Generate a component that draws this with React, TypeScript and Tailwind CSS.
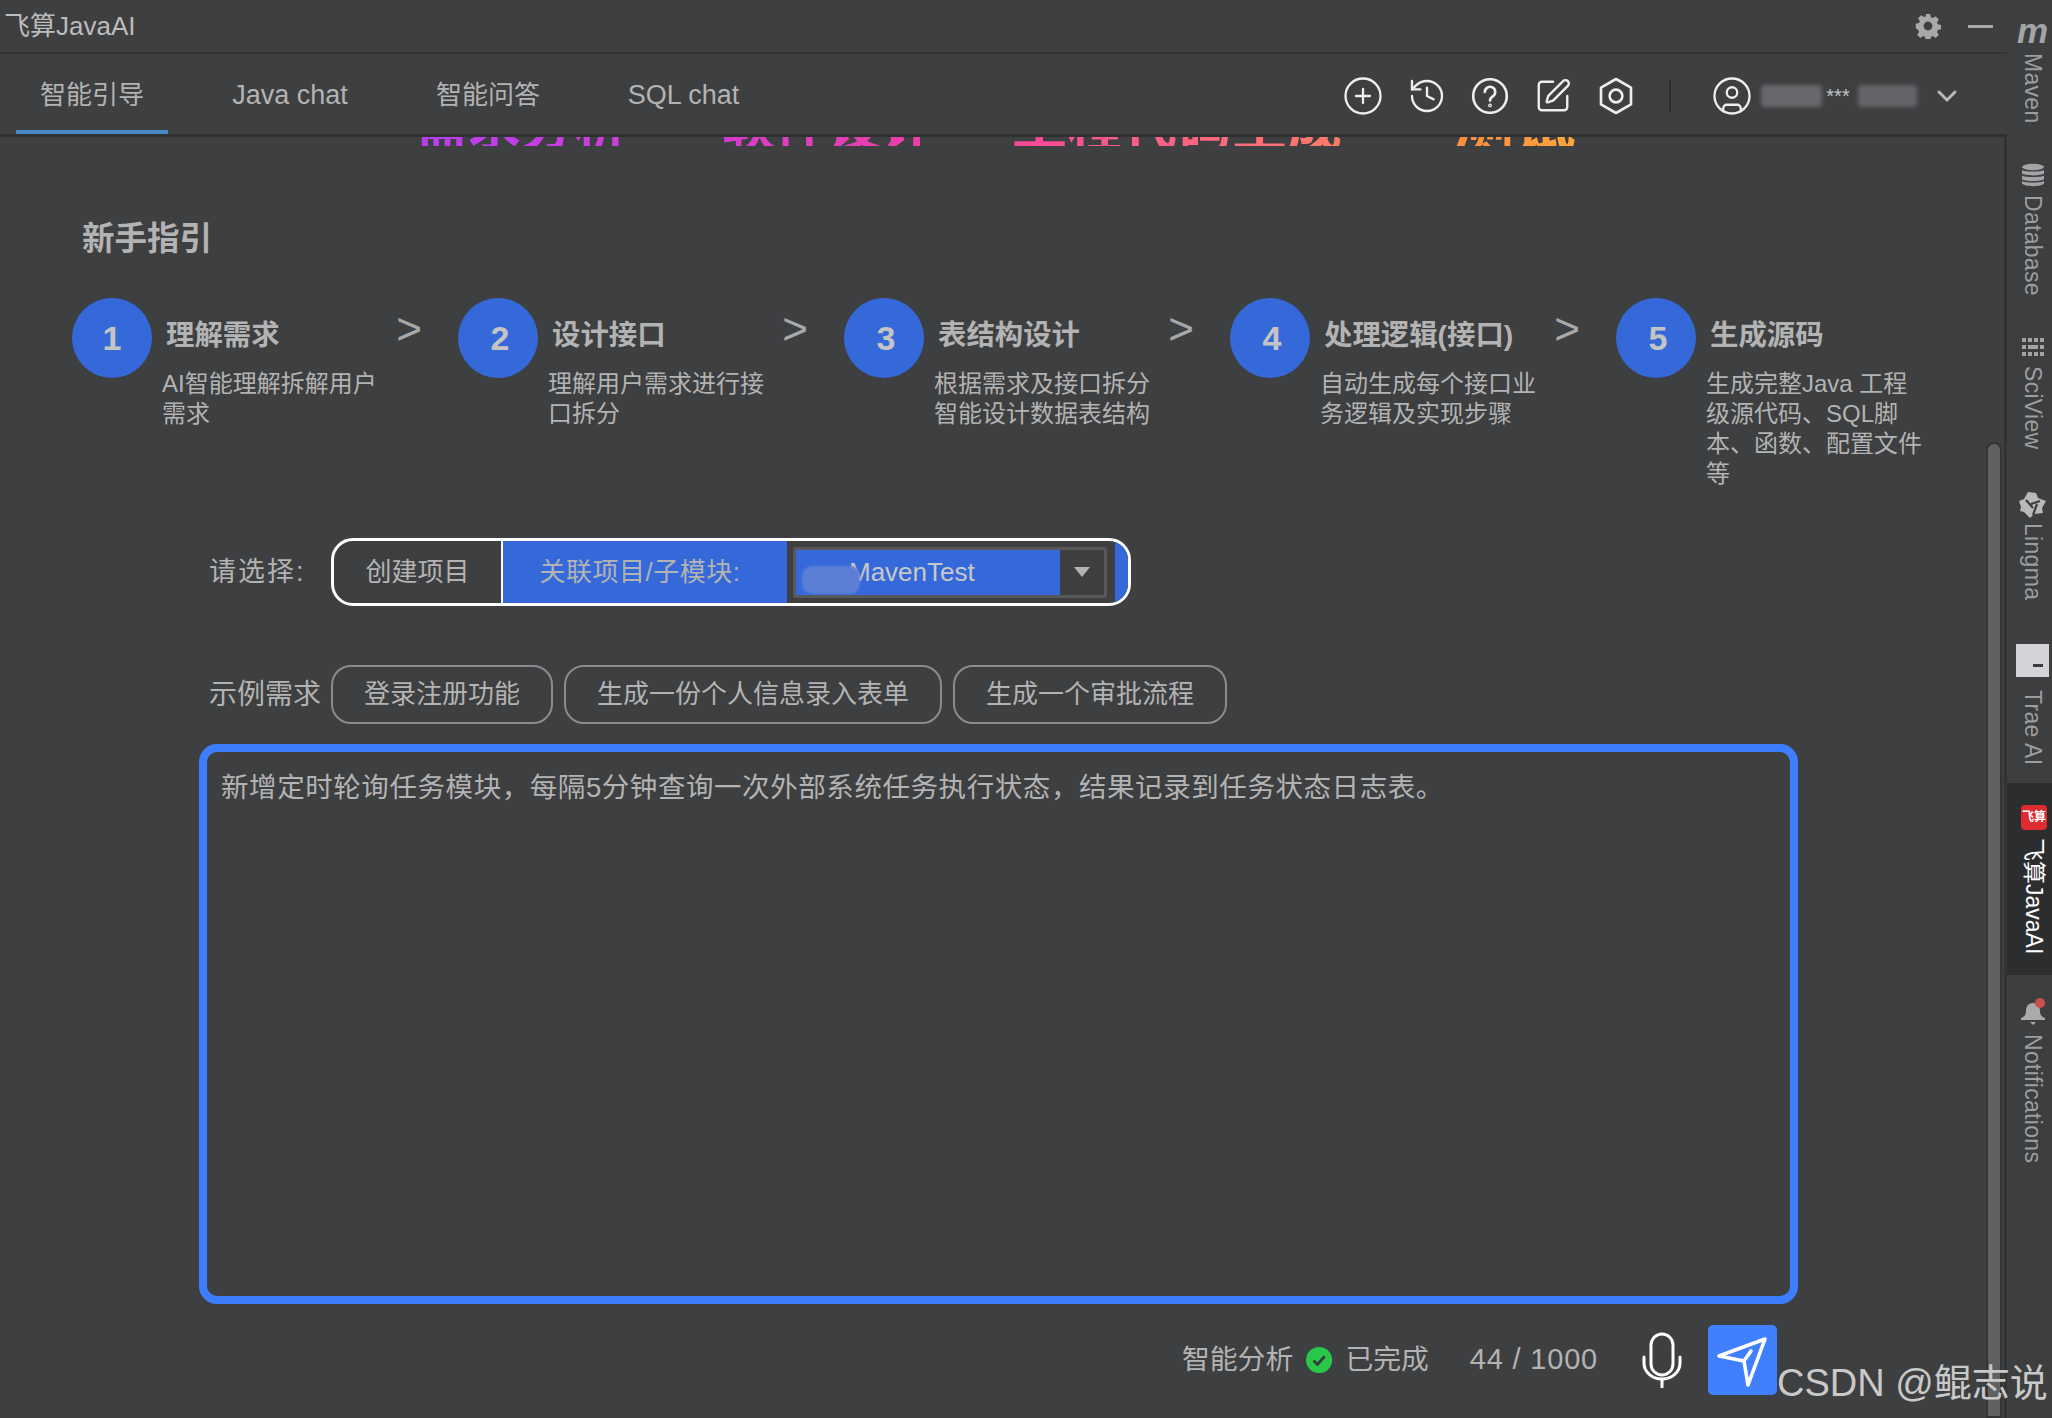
import { ChevronDown, CirclePlus, CircleUser, History, SquarePen } from 'lucide-react';
import type { ReactNode } from 'react';

const FONT = 'font-["Liberation_Sans","Noto_Sans_CJK_SC",sans-serif]';

const TABS = [
  { label: '智能引导', width: 'w-[152px] text-[26px]', active: true },
  { label: 'Java chat', width: 'w-[116px] ml-[64px] text-[27px]', active: false },
  { label: '智能问答', width: 'w-[104px] ml-[88px] text-[26px]', active: false },
  { label: 'SQL chat', width: 'w-[111px] ml-[88px] text-[27px]', active: false },
];

const STEPS = [
  { n: '1', title: '理解需求', desc: ['AI智能理解拆解用户', '需求'] },
  { n: '2', title: '设计接口', desc: ['理解用户需求进行接', '口拆分'] },
  { n: '3', title: '表结构设计', desc: ['根据需求及接口拆分', '智能设计数据表结构'] },
  { n: '4', title: '处理逻辑(接口)', desc: ['自动生成每个接口业', '务逻辑及实现步骤'] },
  { n: '5', title: '生成源码', desc: ['生成完整Java 工程', '级源代码、SQL脚', '本、函数、配置文件', '等'] },
];

const Chips = ['登录注册功能', '生成一份个人信息录入表单', '生成一个审批流程'];

function QuestionCircle() {
  return (
    <svg width="38" height="38" viewBox="0 0 38 38" fill="none" stroke="#eeeeee" strokeWidth="2.6" strokeLinecap="round">
      <circle cx="19" cy="19" r="16.8" />
      <path d="M13.8 15a5.2 5.2 0 1 1 8 4.4c-1.9 1.2-2.8 2.2-2.8 4.2" />
      <circle cx="19" cy="28.4" r="0.6" />
    </svg>
  );
}

function HexNut() {
  return (
    <svg width="34" height="38" viewBox="0 0 34 38" fill="none" stroke="#eeeeee" strokeWidth="2.6" strokeLinejoin="round">
      <path d="M17 2l15 8.6v16.8L17 36 2 27.4V10.6z" />
      <circle cx="17" cy="19" r="6.4" />
    </svg>
  );
}

function Gear() {
  return (
    <svg width="26" height="26" viewBox="0 0 26 26" fill="#a9a9a9">
      <path
        fillRule="evenodd"
        d="M10.8 1h4.4l.7 3.3 1.9.8 2.9-1.8 3.1 3.1-1.8 2.9.8 1.9 3.3.7v4.4l-3.3.7-.8 1.9 1.8 2.9-3.1 3.1-2.9-1.8-1.9.8-.7 3.3h-4.4l-.7-3.3-1.9-.8-2.9 1.8-3.1-3.1 1.8-2.9-.8-1.9L.8 15.2v-4.4l3.3-.7.8-1.9L3.1 5.3l3.1-3.1 2.9 1.8 1.9-.8zM13 8.6a4.4 4.4 0 1 0 0 8.8 4.4 4.4 0 0 0 0-8.8z"
      />
    </svg>
  );
}

function Mic() {
  return (
    <svg width="40" height="56" viewBox="0 0 40 56" fill="none" stroke="#ffffff" strokeWidth="3" strokeLinecap="round">
      <rect x="9" y="2" width="22" height="41" rx="11" />
      <path d="M2 25v6a18 16 0 0 0 36 0v-6M20 47v8" />
    </svg>
  );
}

function PlaneIcon() {
  return (
    <svg width="69" height="70" viewBox="0 0 69 70" fill="none" stroke="#ffffff" strokeWidth="3.6" strokeLinejoin="round" strokeLinecap="round">
      <path d="M57 14L11 31l25 5 4 24zM36 36l7-10" />
    </svg>
  );
}

function LingmaIcon() {
  return (
    <svg className="mb-[5px]" width="28" height="27" viewBox="0 0 28 27">
      <path fill="#b8b9bb" d="M9 1l8 1 2 5 8 3-4 7 1 5-9 1-4 4-6-6-4-1 1-4-2-6 5-2z" />
      <path fill="none" stroke="#3d3e40" strokeWidth="2.2" d="M7 9l7 8M21 10l-9 3M14 24l4-11" />
    </svg>
  );
}

function SideItem({
  icon,
  label,
  className,
}: {
  icon: ReactNode;
  label: string;
  className: string;
}) {
  return (
    <div className={`flex flex-col items-center ${className}`}>
      {icon}
      <span className="text-[23px] leading-[24px] tracking-[0.3px] text-[#9c9d9f] [text-orientation:sideways] [writing-mode:vertical-rl]">
        {label}
      </span>
    </div>
  );
}

function Sidebar() {
  return (
    <aside className="flex w-[45px] shrink-0 flex-col bg-[#3d3e40] pl-[6px]">
      <SideItem
        className="pt-[18px]"
        label="Maven"
        icon={<span className="mb-[9px] h-[26px] text-[35px] leading-[26px] font-bold text-[#a3a4a6] italic">m</span>}
      />
      <SideItem
        className="pt-[39px]"
        label="Database"
        icon={
          <svg className="mb-[8px]" width="24" height="24" viewBox="0 0 24 24" fill="#a3a4a6">
            <ellipse cx="12" cy="4" rx="11" ry="3.2" />
            <path d="M1 7c2 2 20 2 22 0v3.6c-2 2.4-20 2.4-22 0zM1 12.6c2 2 20 2 22 0v3.6c-2 2.4-20 2.4-22 0zM1 18c2 2 20 2 22 0v2.6c-2 3.4-20 3.4-22 0z" />
          </svg>
        }
      />
      <SideItem
        className="pt-[43px]"
        label="SciView"
        icon={
          <svg className="mb-[9px]" width="24" height="19" viewBox="0 0 24 19" fill="#a3a4a6">
            <path d="M1 0h4v4H1zM7 0h4v4H7zM13 0h4v4h-4zM19 0h4v4h-4zM1 7h4v4H1zM7 7h10v4H7zM19 7h4v4h-4zM1 14h4v4H1zM7 14h4v4H7zM13 14h4v4h-4zM19 14h4v4h-4z" />
          </svg>
        }
      />
      <SideItem className="pt-[41px]" label="Lingma" icon={<LingmaIcon />} />
      <SideItem
        className="pt-[44px]"
        label="Trae AI"
        icon={
          <div className="mb-[13px] flex h-[33px] w-[33px] items-center justify-end bg-[#d3d4d8] pt-[10px] pr-[6px]">
            <div className="h-[3px] w-[10px] bg-[#3a3b3d]" />
          </div>
        }
      />
      <div className="mt-[17px] -ml-[6px] flex h-[192px] w-[46px] flex-col items-center bg-[#2c2d2f] pt-[22px] pl-[8px]">
        <div className="mb-[8px] flex h-[25px] w-[26px] items-center justify-center rounded-[4px] bg-[#dd2b2f]">
          <span className="text-[12px] leading-none font-bold whitespace-nowrap text-white">飞算</span>
        </div>
        <span className="text-[23px] leading-[24px] text-white [text-orientation:sideways] [writing-mode:vertical-rl]">
          飞算JavaAI
        </span>
      </div>
      <SideItem
        className="pt-[23px]"
        label="Notifications"
        icon={
          <svg className="mb-[8px]" width="26" height="28" viewBox="0 0 26 28" fill="#a9aaac">
            <path d="M13 5c-5 0-7 4-7 8 0 4-2 6-5 7v2h24v-2c-3-1-5-3-5-7 0-4-2-8-7-8zM10 24h6l-3 3z" />
            <circle cx="20" cy="5" r="5" fill="#c94f4b" />
          </svg>
        }
      />
    </aside>
  );
}

export default function App() {
  return (
    <div className={`flex h-[1418px] w-[2052px] overflow-hidden bg-[#3e3f41] text-[#b3b3b3] ${FONT}`}>
      <main className="flex min-w-0 flex-1 flex-col">
        {/* window title */}
        <header className="flex h-[54px] shrink-0 items-center border-b-2 border-[#333436] pr-[14px] pl-[4px]">
          <span className="text-[26px] text-[#bcbcbc]">飞算JavaAI</span>
          <div className="mr-[27px] ml-auto">
            <Gear />
          </div>
          <div className="h-[3px] w-[25px] bg-[#a9a9a9]" />
        </header>

        {/* tabs */}
        <nav className="flex h-[83px] shrink-0 border-b-[3px] border-[#303133] pl-[16px]">
          {TABS.map((tab) => (
            <div
              key={tab.label}
              className={`flex h-full items-center justify-center border-b-4 pt-[7px] whitespace-nowrap ${tab.width} ${
                tab.active ? 'border-[#4a88c7]' : 'border-transparent'
              }`}
            >
              {tab.label}
            </div>
          ))}
          <div className="ml-auto flex h-full items-center pt-[4px] pr-[44px]">
            <CirclePlus size={42} strokeWidth={1.3} color="#eeeeee" />
            <History size={40} strokeWidth={1.4} color="#eeeeee" className="ml-[23px]" />
            <div className="ml-[24px]">
              <QuestionCircle />
            </div>
            <SquarePen size={38} strokeWidth={1.5} color="#eeeeee" className="ml-[25px]" />
            <div className="ml-[27px]">
              <HexNut />
            </div>
            <div className="ml-[36px] h-[32px] w-[2px] bg-[#2b2c2e]" />
            <CircleUser size={42} strokeWidth={1.3} color="#eeeeee" className="ml-[40px]" />
            <div className="ml-[8px] flex w-[156px] items-center">
              <div className="h-[22px] w-[62px] rounded-sm bg-[#68696b] blur-[2px]" />
              <span className="ml-[4px] text-[20px] leading-none text-[#c4c4c4]">***</span>
              <div className="ml-[8px] h-[22px] w-[60px] rounded-sm bg-[#636466] blur-[2px]" />
            </div>
            <ChevronDown size={32} strokeWidth={2.2} color="#b9b9b9" className="ml-[14px]" />
          </div>
        </nav>

        {/* content */}
        <section className="relative min-h-0 flex-1 overflow-hidden border-r-[3px] border-[#313234]">
          {/* scrolled-away heading */}
          <div className="flex h-[9px] items-end overflow-hidden pl-[415px]">
            <div className="-mb-[8px] flex shrink-0 text-[53px] leading-[53px] font-bold whitespace-nowrap">
              <span className="bg-gradient-to-r from-[#b73df0] to-[#cf3cd8] bg-clip-text text-transparent">需求分析</span>
              <span className="ml-[95px] bg-gradient-to-r from-[#d53ccc] to-[#ee3fa4] bg-clip-text text-transparent">软件设计</span>
              <span className="ml-[78px] w-[330px] bg-gradient-to-r from-[#f8459a] to-[#ff7a66] bg-clip-text text-[55px] text-transparent">工程代码生成</span>
              <span className="ml-[110px] w-[128px] bg-gradient-to-r from-[#ff8c40] to-[#ffa53c] bg-clip-text text-[62px] text-transparent">测试</span>
            </div>
          </div>

          <h2 className="mt-[75px] pl-[82px] text-[32.5px] leading-[36px] font-bold">新手指引</h2>

          {/* steps */}
          <div className="mt-[41px] flex pl-[72px]">
            {STEPS.map((step, i) => (
              <div key={step.n} className="flex w-[386px] shrink-0">
                <div
                  className={`flex h-[80px] w-[80px] shrink-0 items-center justify-center rounded-full bg-[#3568d8] text-[34px] font-bold text-[#c4c4c4] ${
                    i > 0 ? 'pl-[4px]' : ''
                  }`}
                >
                  {step.n}
                </div>
                <div className="ml-[10px] w-[260px] pt-[20px]">
                  <div className="flex h-[34px] items-center justify-between pl-[4px]">
                    <span className="text-[28.4px] leading-[34px] font-bold whitespace-nowrap">{step.title}</span>
                    {i < 4 && <span className="-mt-[12px] text-[44px] leading-[34px] font-light text-[#a8a8a8]">&gt;</span>}
                  </div>
                  <div className="mt-[17px] text-[24px] leading-[30px] whitespace-nowrap">
                    {step.desc.map((line) => (
                      <div key={line}>{line}</div>
                    ))}
                  </div>
                </div>
              </div>
            ))}
          </div>

          {/* project select */}
          <div className="mt-[49px] flex items-center pl-[209px]">
            <span className="w-[122px] text-[27px] tracking-[2px]">请选择:</span>
            <div className="flex h-[68px] w-[800px] overflow-hidden rounded-[22px] border-[3px] border-white">
              <div className="flex w-[169px] shrink-0 items-center justify-center border-r-[2px] border-white text-[26px]">
                创建项目
              </div>
              <div className="flex w-[284px] shrink-0 items-center justify-center bg-[#3568d8] pr-[10px] text-[26px] tracking-[0.5px]">
                关联项目/子模块:
              </div>
              <div className="flex flex-1 items-center pl-[6px]">
                <div className="relative flex h-[51px] w-[314px] rounded-[3px] border-[3px] border-[#57585a]">
                  <div className="flex flex-1 items-center bg-[#3568d8] pl-[53px] text-[26px] text-[#c8c8c8]">MavenTest</div>
                  <div className="absolute top-[16px] left-[6px] h-[28px] w-[58px] rounded-[10px] bg-[#5c7fd6] blur-[1px]" />
                  <div className="flex w-[44px] items-center justify-center">
                    <div className="h-0 w-0 border-x-[8px] border-t-[10px] border-x-transparent border-t-[#b3b3b3]" />
                  </div>
                </div>
              </div>
              <div className="w-[13px] shrink-0 bg-[#3568d8]" />
            </div>
          </div>

          {/* samples */}
          <div className="mt-[59px] flex items-center pl-[209px]">
            <span className="w-[122px] text-[28px]">示例需求</span>
            <div className="flex gap-[11px]">
              {Chips.map((chip) => (
                <div
                  key={chip}
                  className="flex h-[59px] items-center rounded-[20px] border-2 border-[#8b8c8e] px-[31px] text-[26px] whitespace-nowrap"
                >
                  {chip}
                </div>
              ))}
            </div>
          </div>

          {/* requirement */}
          <div className="mt-[20px] ml-[199px] h-[560px] w-[1599px] rounded-[18px] border-8 border-[#3d7eff] px-[14px] pt-[18px] text-[27.5px] leading-[36px] tracking-[0.57px]">
            新增定时轮询任务模块，每隔5分钟查询一次外部系统任务执行状态，结果记录到任务状态日志表。
          </div>

          {/* status */}
          <div className="mt-[21px] flex items-start pl-[1182px]">
            <div className="flex h-[70px] w-[416px] items-center text-[27.8px] whitespace-nowrap">
              <span>智能分析</span>
              <svg className="ml-[13px]" width="28" height="28" viewBox="0 0 28 28">
                <circle cx="14" cy="14" r="14" fill="#28c84a" />
                <path d="M8 14.5l4.2 4.2L20 10" fill="none" stroke="#3a3b3d" strokeWidth="3" />
              </svg>
              <span className="ml-[13px]">已完成</span>
              <span className="ml-[41px] text-[29px] tracking-[0.8px]">44 / 1000</span>
            </div>
            <div className="ml-[44px] pt-[7px]">
              <Mic />
            </div>
            <div className="ml-[26px] h-[70px] w-[69px] rounded-[5px] bg-[#4080ff]">
              <PlaneIcon />
            </div>
          </div>

          {/* scrollbar */}
          <div className="absolute top-[305px] right-[2px] bottom-0 w-[16px] rounded-t-[8px] border-2 border-[#333436] bg-[#606163]" />
        </section>
      </main>
      <Sidebar />
      {/* watermark */}
      <div className="absolute top-[1358px] left-[1777px] text-[38px] leading-[50px] whitespace-nowrap text-[#c9c9c9]">CSDN @鲲志说</div>
    </div>
  );
}
